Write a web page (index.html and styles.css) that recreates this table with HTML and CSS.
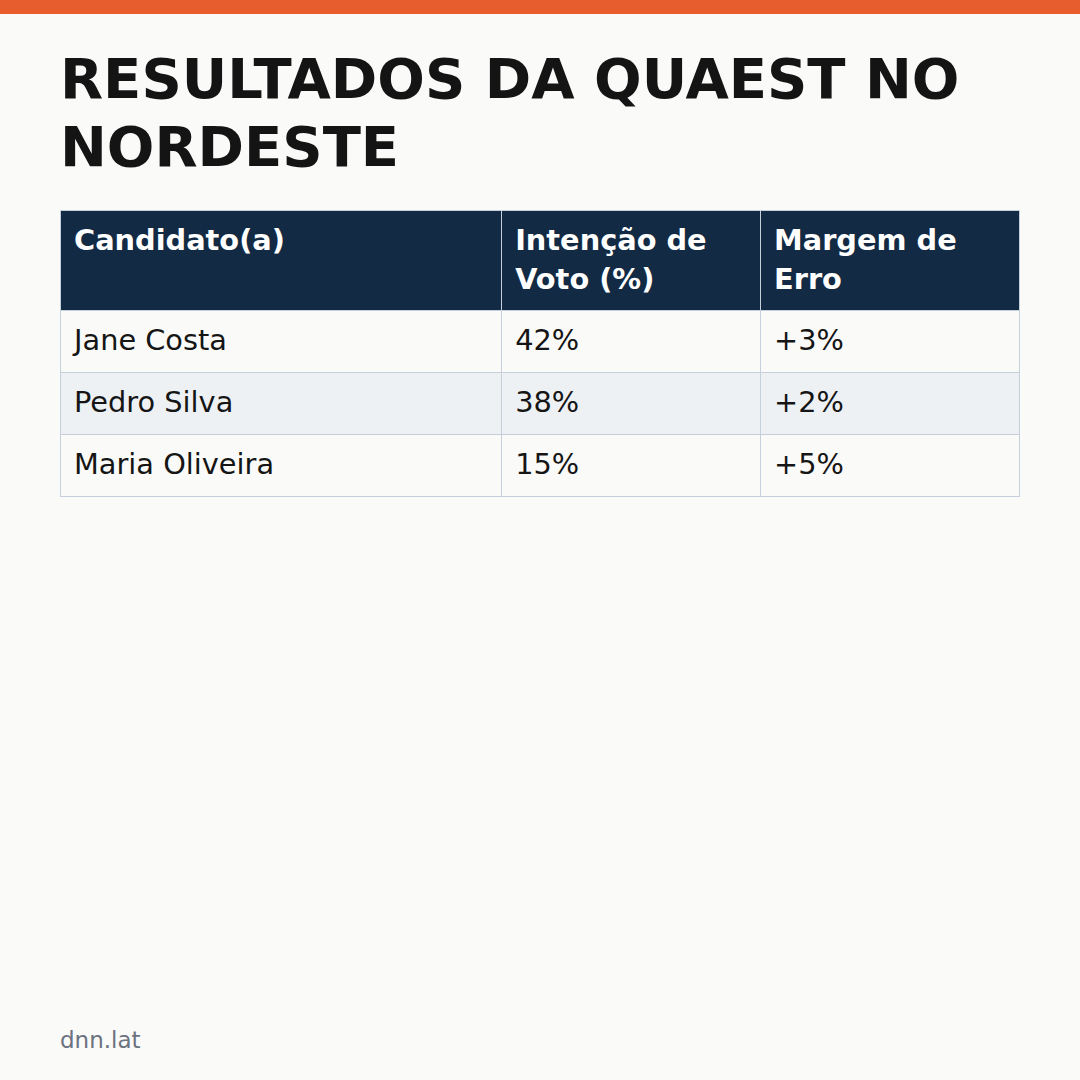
FILE: index.html
```html
<!DOCTYPE html>
<html lang="pt-BR">
<head>
  <meta charset="UTF-8" />
  <meta name="viewport" content="width=device-width, initial-scale=1.0"/>
  <title>Resultados da Quaest no Nordeste</title>
  <link rel="stylesheet" href="styles.css">
</head>
<body>

  <div class="top-bar"></div>

  <main class="page">
    <h1>RESULTADOS DA QUAEST NO NORDESTE</h1>

    <table class="results">
      <thead>
        <tr>
          <th class="col-name">Candidato(a)</th>
          <th class="col-num">Intenção de Voto (%)</th>
          <th class="col-num">Margem de Erro</th>
        </tr>
      </thead>
      <tbody>
        <tr>
          <td>Jane Costa</td>
          <td>42%</td>
          <td>+3%</td>
        </tr>
        <tr>
          <td>Pedro Silva</td>
          <td>38%</td>
          <td>+2%</td>
        </tr>
        <tr>
          <td>Maria Oliveira</td>
          <td>15%</td>
          <td>+5%</td>
        </tr>
      </tbody>
    </table>

    <footer class="source">dnn.lat</footer>
  </main>

</body>
</html>
```

FILE: styles.css
```css
html, body {
  height: 100%;
}
body {
  margin: 0;
  background: #fafaf8;
  color: #151515;
  font-family: "DejaVu Sans", Verdana, sans-serif;
  display: flex;
  flex-direction: column;
}
.top-bar {
  height: 14px;
  background: #e85d2e;
  flex-shrink: 0;
}
.page {
  flex: 1;
  display: flex;
  flex-direction: column;
  padding: 31px 60px 25px;
}
h1 {
  margin: 0 0 28px;
  font-size: 56px;
  line-height: 1.22;
  font-weight: bold;
  color: #141414;
}
.results {
  width: 100%;
  border-collapse: collapse;
  table-layout: fixed;
  font-size: 28.8px;
  line-height: 1.35;
}
.results th, .results td {
  box-sizing: border-box;
  border: 1px solid #c5d0dc;
  padding: 10px 13px 12px;
  text-align: left;
  vertical-align: top;
}
.results th {
  background: #132a44;
  color: #fff;
  font-weight: bold;
}
.results .col-name {
  width: 46%;
}
.results .col-num {
  width: 27%;
}
.results tbody tr:nth-child(even) td {
  background: #eef1f4;
}
.source {
  margin-top: auto;
  font-size: 23px;
  line-height: 1.2;
  color: #6b7280;
}
```
